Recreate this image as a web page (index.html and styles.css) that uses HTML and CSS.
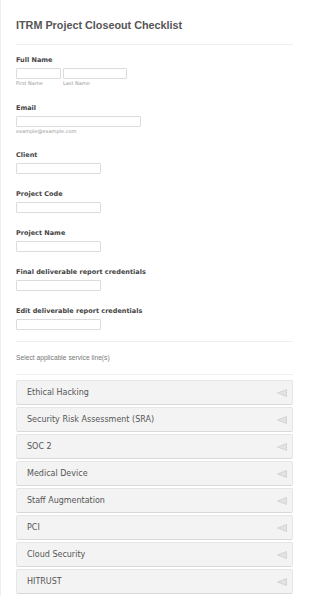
FILE: index.html
```html
<!DOCTYPE html>
<html lang="en">
<head>
    <meta charset="UTF-8">
    <meta name="viewport" content="width=device-width, initial-scale=1.0">
    <title>ITRM Project Closeout Checklist</title>

    <link rel="stylesheet" href="styles.css">
</head>
<body>
<div class="page">

    <h1 class="title">ITRM Project Closeout Checklist</h1>
    <div class="line"></div>

    <!-- 姓名 两个输入框 -->
    <div class="field first">
        <label class="label">Full Name</label>
        <div class="row">
            <div class="col">
                <input type="text" class="input short">
                <p class="hint">First Name</p>
            </div>
            <div class="col">
                <input type="text" class="input mid">
                <p class="hint">Last Name</p>
            </div>
        </div>
    </div>

    <div class="field">
        <label class="label">Email</label>
        <input type="text" class="input long">
        <p class="hint">example@example.com</p>
    </div>

    <div class="field">
        <label class="label">Client</label>
        <input type="text" class="input">
    </div>

    <div class="field">
        <label class="label">Project Code</label>
        <input type="text" class="input">
    </div>

    <div class="field">
        <label class="label">Project Name</label>
        <input type="text" class="input">
    </div>

    <div class="field">
        <label class="label">Final deliverable report credentials</label>
        <input type="text" class="input">
    </div>

    <div class="field">
        <label class="label">Edit deliverable report credentials</label>
        <input type="text" class="input">
    </div>

    <div class="line gap"></div>
    <p class="note">Select applicable service line(s)</p>
    <div class="line gap"></div>

    <ul class="services">
        <li>Ethical Hacking<svg class="arrow" width="10" height="8" viewBox="0 0 10 8"><polygon points="0.5,4 9.5,0.5 9.5,7.5"/></svg></li>
        <li>Security Risk Assessment (SRA)<svg class="arrow" width="10" height="8" viewBox="0 0 10 8"><polygon points="0.5,4 9.5,0.5 9.5,7.5"/></svg></li>
        <li>SOC 2<svg class="arrow" width="10" height="8" viewBox="0 0 10 8"><polygon points="0.5,4 9.5,0.5 9.5,7.5"/></svg></li>
        <li>Medical Device<svg class="arrow" width="10" height="8" viewBox="0 0 10 8"><polygon points="0.5,4 9.5,0.5 9.5,7.5"/></svg></li>
        <li>Staff Augmentation<svg class="arrow" width="10" height="8" viewBox="0 0 10 8"><polygon points="0.5,4 9.5,0.5 9.5,7.5"/></svg></li>
        <li>PCI<svg class="arrow" width="10" height="8" viewBox="0 0 10 8"><polygon points="0.5,4 9.5,0.5 9.5,7.5"/></svg></li>
        <li>Cloud Security<svg class="arrow" width="10" height="8" viewBox="0 0 10 8"><polygon points="0.5,4 9.5,0.5 9.5,7.5"/></svg></li>
        <li>HITRUST<svg class="arrow" width="10" height="8" viewBox="0 0 10 8"><polygon points="0.5,4 9.5,0.5 9.5,7.5"/></svg></li>
    </ul>

</div>
</body>
</html>
```

FILE: styles.css
```css
        body{
            margin: 0;
            background-color: #fff;
            font-family: "DejaVu Sans", Verdana, sans-serif;
            color: #555;
        }
        .page{
            min-height: 596px;
            border-left: 1px solid #eee;
            padding: 0 17px 0 15px;
        }
        .title{
            margin: 0;
            padding-top: 18px;
            font-family: "Liberation Sans", Arial, sans-serif;
            font-size: 10.8px;
            line-height: 14px;
            font-weight: bold;
            color: #555;
        }
        .line{
            height: 1px;
            margin-top: 12px;
            background-color: #eee;
        }
        .line.gap{
            margin-top: 11px;
        }
        .note + .line.gap{
            margin-top: 12px;
        }
        .field{
            margin-top: 16px;
        }
        .field.first{
            margin-top: 11px;
        }
        .label{
            display: block;
            margin-bottom: 4px;
            font-size: 6.5px;
            line-height: 8px;
            font-weight: bold;
            color: #444;
        }
        .row{
            display: flex;
            gap: 2px;
        }
        .input{
            display: block;
            box-sizing: border-box;
            width: 85px;
            height: 11px;
            margin: 0;
            padding: 0;
            border: 1px solid #dcdcdc;
            border-radius: 1px;
            background-color: #fff;
            outline: none;
        }
        .input.short{
            width: 45px;
        }
        .input.mid{
            width: 64px;
        }
        .input.long{
            width: 125px;
        }
        .hint{
            margin: 1px 0 1px;
            font-size: 5px;
            line-height: 7px;
            color: #999;
        }
        .note{
            margin: 12px 0 0;
            font-family: "Liberation Sans", Arial, sans-serif;
            font-size: 6.7px;
            line-height: 8px;
            color: #777;
        }
        .services{
            list-style: none;
            margin: 5px 0 0;
            padding: 0;
        }
        .services li{
            display: flex;
            align-items: center;
            justify-content: space-between;
            box-sizing: border-box;
            height: 25px;
            margin-bottom: 2px;
            padding: 0 5px 0 10px;
            border: 1px solid #e6e6e6;
            border-bottom-color: #d9d9d9;
            border-radius: 2px;
            background-color: #f3f3f3;
            font-size: 8px;
            color: #555;
        }
        .arrow polygon{
            fill: #e2e2e2;
            stroke: #cfcfcf;
            stroke-width: 0.8;
            stroke-linejoin: round;
        }
```
